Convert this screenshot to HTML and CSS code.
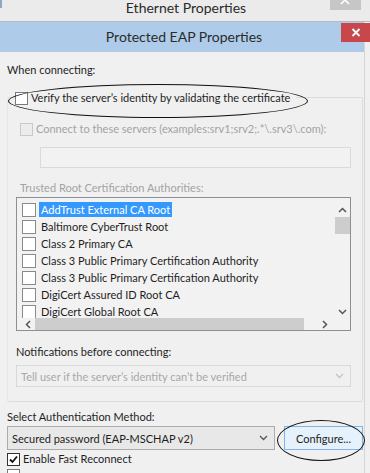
FILE: index.html
```html
<!DOCTYPE html>
<html lang="en">
<head>
  <meta charset="UTF-8" />
  <title>Protected EAP Properties</title>
  <link rel="stylesheet" href="styles.css">
</head>
<body>
  <div class="parent-bar">
    <span class="parent-edge"></span>
    <span class="parent-title">Ethernet Properties</span>
    <span class="parent-close">
      <svg width="31" height="10" viewBox="0 0 31 10"><path d="M11 -4 L19 4 M19 -4 L11 4" stroke="#fff" stroke-width="1.6"/></svg>
    </span>
  </div>

  <div class="dialog">
    <div class="titlebar">
      <span class="title">Protected EAP Properties</span>
      <span class="close-btn">
        <svg width="10" height="9" viewBox="0 0 10 9"><path d="M1.5 1 L8.5 8 M8.5 1 L1.5 8" stroke="#fff" stroke-width="1.8"/></svg>
      </span>
    </div>

    <div class="content">
      <div class="label when">When connecting:</div>

      <div class="group">
        <label class="check verify">
          <span class="box"></span>
          <span>Verify the server’s identity by validating the certificate</span>
        </label>
        <div class="ring ring-verify"></div>

        <label class="check disabled servers">
          <span class="box"></span>
          <span>Connect to these servers (examples:srv1;srv2;.*\.srv3\.com):</span>
        </label>
        <div class="textbox"></div>

        <div class="label disabled trusted">Trusted Root Certification Authorities:</div>
        <div class="listbox">
          <div class="list-rows">
            <div class="row"><span class="box"></span><span class="item selected">AddTrust External CA Root</span></div>
            <div class="row"><span class="box"></span><span class="item">Baltimore CyberTrust Root</span></div>
            <div class="row"><span class="box"></span><span class="item">Class 2 Primary CA</span></div>
            <div class="row"><span class="box"></span><span class="item">Class 3 Public Primary Certification Authority</span></div>
            <div class="row"><span class="box"></span><span class="item">Class 3 Public Primary Certification Authority</span></div>
            <div class="row"><span class="box"></span><span class="item">DigiCert Assured ID Root CA</span></div>
            <div class="row"><span class="box"></span><span class="item">DigiCert Global Root CA</span></div>
          </div>
          <div class="vscroll">
            <svg class="arrow" width="9" height="6" viewBox="0 0 9 6"><path d="M1 5 L4.5 1.5 L8 5" fill="none" stroke="#555" stroke-width="1.5"/></svg>
            <div class="vthumb"></div>
            <div class="vtrack"></div>
            <svg class="arrow" width="9" height="6" viewBox="0 0 9 6"><path d="M1 1 L4.5 4.5 L8 1" fill="none" stroke="#555" stroke-width="1.5"/></svg>
          </div>
          <div class="hscroll">
            <svg class="arrow" width="6" height="9" viewBox="0 0 6 9"><path d="M5 1 L1.5 4.5 L5 8" fill="none" stroke="#555" stroke-width="1.5"/></svg>
            <div class="hthumb"></div>
            <svg class="arrow" width="6" height="9" viewBox="0 0 6 9"><path d="M1 1 L4.5 4.5 L1 8" fill="none" stroke="#555" stroke-width="1.5"/></svg>
          </div>
        </div>

        <div class="label notify">Notifications before connecting:</div>
        <div class="select disabled-select">
          <span>Tell user if the server’s identity can’t be verified</span>
          <svg width="9" height="6" viewBox="0 0 9 6"><path d="M1 1 L4.5 4.5 L8 1" fill="none" stroke="#c4c4c4" stroke-width="1.3"/></svg>
        </div>
      </div>

      <div class="label method">Select Authentication Method:</div>
      <div class="method-row">
        <div class="select method-select">
          <span>Secured password (EAP-MSCHAP v2)</span>
          <svg width="9" height="6" viewBox="0 0 9 6"><path d="M1 1 L4.5 4.5 L8 1" fill="none" stroke="#555" stroke-width="1.3"/></svg>
        </div>
        <button class="configure">Configure...</button>
      </div>
      <div class="ring ring-config"></div>

      <label class="check fast">
        <span class="box checked">
          <svg width="11" height="11" viewBox="0 0 11 11"><path d="M2 5.5 L4.5 8 L9 2.5" fill="none" stroke="#111" stroke-width="1.8"/></svg>
        </span>
        <span>Enable Fast Reconnect</span>
      </label>
      <label class="check last">
        <span class="box"></span>
      </label>
    </div>
  </div>
</body>
</html>
```

FILE: styles.css
```css
body {
  margin: 0;
  width: 370px;
  height: 473px;
  overflow: hidden;
  background-color: #f0f0f0;
  font-family: 'Lato', sans-serif;
  font-size: 11px;
  color: #1e1e1e;
  position: relative;
}

.parent-bar {
  height: 21px;
  background-color: #ebebeb;
  border-bottom: 1px solid #b9b9b9;
  position: relative;
  text-align: center;
}

.parent-title {
  display: block;
  font-size: 14px;
  line-height: 16px;
  color: #2a2a2a;
  padding-left: 2px;
}

.parent-edge {
  position: absolute;
  left: 0;
  top: 0;
  width: 2px;
  height: 8px;
  background-color: #8fa6c2;
}

.parent-close {
  position: absolute;
  left: 330px;
  top: 0;
  width: 31px;
  height: 10px;
  background-color: #c6c6c6;
  display: flex;
}

.dialog {
  width: 364px;
  border-right: 1px solid #d6d6d6;
}

.titlebar {
  height: 30px;
  background-color: #aecbea;
  text-align: center;
  position: relative;
}

.title {
  font-size: 14px;
  line-height: 30px;
  color: #2b2b2b;
  padding-left: 4px;
}

.close-btn {
  position: absolute;
  left: 341px;
  top: 1px;
  width: 29px;
  height: 19px;
  background-color: #c7474b;
  display: flex;
  align-items: center;
  justify-content: center;
}

.content {
  padding-left: 7px;
  position: relative;
}

.label {
  line-height: 16px;
}

.disabled {
  color: #a3a3a3;
}

.when {
  padding-top: 10px;
}

.group {
  margin-top: 19px;
  width: 356px;
  height: 305px;
  border: 1px solid #dcdcdc;
  border-left-color: #e6e6e6;
  border-radius: 2px;
  box-sizing: border-box;
  position: relative;
}

.check {
  display: flex;
  align-items: center;
  gap: 3px;
  line-height: 16px;
  white-space: nowrap;
}

.box {
  width: 11px;
  height: 11px;
  border: 1px solid #7a7a7a;
  background-color: #fff;
  flex: none;
  display: inline-flex;
  align-items: center;
  justify-content: center;
}

.verify {
  margin: -8px 0 0 7px;
  padding-right: 6px;
  width: max-content;
  background-color: #f0f0f0;
}

.servers {
  margin: 15px 0 0 12px;
}

.servers .box {
  border-color: #c9c9c9;
  background-color: #ececec;
}

.textbox {
  margin: 10px 0 0 32px;
  width: 311px;
  height: 21px;
  border: 1px solid #dadada;
  box-sizing: border-box;
  background-color: #f2f2f2;
}

.trusted {
  margin: 12px 0 0 12px;
}

.listbox {
  margin: 1px 0 0 8px;
  width: 335px;
  height: 134px;
  border: 1px solid #8b9097;
  box-sizing: border-box;
  display: grid;
  grid-template-columns: 1fr 16px;
  grid-template-rows: 1fr 12px;
  background-color: #f2f2f2;
}

.list-rows {
  padding: 3px 0 0 5px;
  overflow: hidden;
}

.row {
  display: flex;
  align-items: center;
  gap: 3px;
  height: 17px;
}

.row .box {
  width: 12px;
  height: 12px;
  border-color: #8a8a8a;
}

.item {
  padding: 0 2px;
  line-height: 15px;
  white-space: nowrap;
}

.item.selected {
  background-color: #3399ff;
  color: #fff;
}

.vscroll {
  display: flex;
  flex-direction: column;
  align-items: center;
  padding: 9px 0 3px;
}

.vthumb {
  width: 15px;
  height: 17px;
  background-color: #cdcdcd;
  margin-top: 4px;
}

.vtrack {
  flex: 1;
}

.hscroll {
  grid-column: 1 / 3;
  display: flex;
  align-items: center;
  padding: 0 22px 0 8px;
  gap: 4px;
}

.hthumb {
  flex: 1;
  height: 12px;
  background-color: #cdcdcd;
  margin-right: 14px;
}

.notify {
  margin: 13px 0 0 8px;
}

.select {
  display: flex;
  align-items: center;
  justify-content: space-between;
  box-sizing: border-box;
  padding: 0 6px 0 4px;
  white-space: nowrap;
}

.disabled-select {
  margin: 5px 0 0 8px;
  width: 335px;
  height: 22px;
  border: 1px solid #d9d9d9;
  color: #a8a8a8;
}

.method {
  margin-top: 7px;
}

.method-row {
  display: flex;
  gap: 9px;
  margin-top: 1px;
}

.method-select {
  width: 268px;
  height: 24px;
  border: 1px solid #acacac;
  background-color: #e8e8e8;
}

.configure {
  width: 79px;
  height: 24px;
  border: 1px solid #7eb4ea;
  background-color: #e5f1fb;
  font-family: inherit;
  font-size: 11px;
  color: #1e1e1e;
  padding: 0;
}

.fast {
  margin-top: 1px;
}

.box.checked {
  border-color: #333;
}

.last {
  margin-top: 2px;
}

.ring {
  position: absolute;
  border: 1px solid #111;
  border-radius: 50%;
}

.ring-verify {
  left: 0;
  top: -14px;
  width: 298px;
  height: 32px;
}

.ring-config {
  left: 277px;
  top: 368px;
  width: 86px;
  height: 39px;
}
```
